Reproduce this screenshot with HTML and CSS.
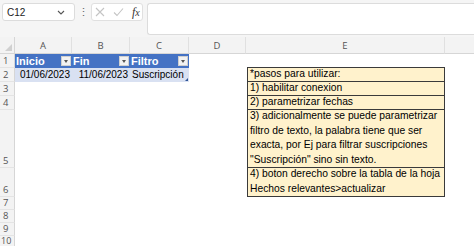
FILE: index.html
```html
<!DOCTYPE html>
<html lang="es">
<head>
  <meta charset="UTF-8" />
  <title>Hechos relevantes</title>
  <link rel="stylesheet" href="styles.css">
</head>
<body>
  <div class="formula-bar">
    <div class="name-box">
      <span>C12</span>
      <svg class="chev" width="8" height="5" viewBox="0 0 8 5"><path d="M1 1l3 3 3-3" fill="none" stroke="#555" stroke-width="1.1"/></svg>
    </div>
    <div class="grip">⋮</div>
    <div class="fx-buttons">
      <svg width="10" height="10" viewBox="0 0 10 10"><path d="M1 1l8 8M9 1l-8 8" stroke="#c4c4c4" stroke-width="1.1"/></svg>
      <svg width="11" height="10" viewBox="0 0 11 10"><path d="M1 5.5l3 3 6-7" fill="none" stroke="#c4c4c4" stroke-width="1.1"/></svg>
      <span class="fx">f<i>x</i></span>
    </div>
    <div class="formula-input"></div>
  </div>

  <div class="sheet">
    <!-- column headers -->
    <div class="corner"><span class="tri"></span></div>
    <div class="ch">A</div>
    <div class="ch">B</div>
    <div class="ch">C</div>
    <div class="ch">D</div>
    <div class="ch">E</div>
    <div class="ch last"></div>

    <!-- row 1 -->
    <div class="rh">1</div>
    <div class="cell th">Inicio<span class="dd"></span></div>
    <div class="cell th">Fin<span class="dd"></span></div>
    <div class="cell th">Filtro<span class="dd"></span></div>
    <div class="cell"></div>
    <div class="cell"></div>
    <div class="cell"></div>

    <!-- row 2 -->
    <div class="rh">2</div>
    <div class="cell td num">01/06/2023</div>
    <div class="cell td num">11/06/2023</div>
    <div class="cell td">Suscripción<span class="handle"></span></div>
    <div class="cell"></div>
    <div class="cell note first">*pasos para utilizar:</div>
    <div class="cell"></div>

    <!-- row 3 -->
    <div class="rh">3</div>
    <div class="cell"></div>
    <div class="cell"></div>
    <div class="cell"></div>
    <div class="cell"></div>
    <div class="cell note">1) habilitar conexion</div>
    <div class="cell"></div>

    <!-- row 4 -->
    <div class="rh">4</div>
    <div class="cell"></div>
    <div class="cell"></div>
    <div class="cell"></div>
    <div class="cell"></div>
    <div class="cell note">2) parametrizar fechas</div>
    <div class="cell"></div>

    <!-- row 5 -->
    <div class="rh">5</div>
    <div class="cell"></div>
    <div class="cell"></div>
    <div class="cell"></div>
    <div class="cell"></div>
    <div class="cell note wrap">3) adicionalmente se puede parametrizar<br>filtro de texto, la palabra tiene que ser<br>exacta, por Ej para filtrar suscripciones<br>"Suscripción" sino sin texto.</div>
    <div class="cell"></div>

    <!-- row 6 -->
    <div class="rh">6</div>
    <div class="cell"></div>
    <div class="cell"></div>
    <div class="cell"></div>
    <div class="cell"></div>
    <div class="cell note wrap">4) boton derecho sobre la tabla de la hoja<br>Hechos relevantes&gt;actualizar</div>
    <div class="cell"></div>

    <div class="rh">7</div>
    <div class="blank"></div>
    <div class="rh">8</div>
    <div class="blank"></div>
    <div class="rh">9</div>
    <div class="blank"></div>
    <div class="rh short">10</div>
    <div class="blank"></div>
  </div>
</body>
</html>
```

FILE: styles.css
```css
* {
  box-sizing: border-box;
  margin: 0;
  padding: 0;
}

body {
  width: 474px;
  height: 246px;
  overflow: hidden;
  background: #fff;
  font-family: "Liberation Sans", Arial, sans-serif;
}

/* formula bar */
.formula-bar {
  height: 37px;
  background: #f5f5f5;
  display: flex;
  align-items: flex-start;
  padding: 3px 0 0 2px;
}

.name-box {
  width: 73px;
  height: 18px;
  background: #fff;
  border: 1px solid #dcdcdc;
  border-radius: 3px;
  display: flex;
  align-items: center;
  justify-content: space-between;
  padding: 0 9px 0 4px;
  font-size: 10px;
  color: #222;
}

.grip {
  width: 16px;
  text-align: center;
  font-size: 11px;
  line-height: 18px;
  color: #666;
}

.fx-buttons {
  width: 52px;
  height: 18px;
  background: #fff;
  border: 1px solid #e0e0e0;
  border-radius: 3px;
  display: flex;
  align-items: center;
  gap: 8px;
  padding-left: 3px;
}

.fx {
  font-family: "Liberation Serif", serif;
  font-style: italic;
  font-size: 12px;
  color: #333;
}

.fx i {
  font-size: 10px;
}

.formula-input {
  flex: 1;
  height: 32px;
  margin-left: 4px;
  background: #fff;
  border: 1px solid #dcdcdc;
  border-right: none;
  border-radius: 3px 0 0 3px;
}

/* grid */
.sheet {
  display: grid;
  grid-template-columns: 15px 57px 58px 59px 57px 199px 1fr;
  grid-template-rows: 17px 14px 14px 14px 14px 58px 29px 13px 13px 13px 10px;
  font-size: 10px;
}

.corner {
  background: #f3f3f3;
  border-right: 1px solid #d6d6d6;
  border-bottom: 1px solid #d6d6d6;
  position: relative;
}

.tri {
  position: absolute;
  right: 2px;
  bottom: 2px;
  width: 0;
  height: 0;
  border-left: 7px solid transparent;
  border-bottom: 7px solid #d0d0d0;
}

.ch {
  background: #f3f3f3;
  border-right: 1px solid #e0e0e0;
  border-bottom: 1px solid #d6d6d6;
  text-align: center;
  font-family: "Open Sans", sans-serif;
  font-size: 9.5px;
  line-height: 18px;
  color: #555;
}

.ch.last {
  border-right: none;
}

.rh {
  grid-column: 1;
  background: #f3f3f3;
  border-right: 1px solid #d6d6d6;
  border-bottom: 1px solid #e4e4e4;
  display: flex;
  align-items: flex-end;
  padding-left: 3px;
  font-family: "Open Sans", sans-serif;
  font-size: 9.5px;
  line-height: 13px;
  color: #555;
}

.rh.short {
  padding-left: 1px;
  align-items: flex-start;
  line-height: 9px;
  font-size: 9px;
  border-bottom: none;
}

.blank {
  grid-column: 2 / -1;
}

.cell {
  position: relative;
  white-space: nowrap;
  color: #000;
  line-height: 14px;
  padding: 0 2px;
}

.th {
  background: #4472c4;
  color: #fff;
  font-weight: bold;
  font-size: 11px;
  padding-left: 1px;
}

.dd {
  position: absolute;
  right: 1px;
  top: 2px;
  width: 10px;
  height: 10px;
  background: #f2f2f2;
  border: 1px solid #cfcfcf;
}

.dd::after {
  content: '';
  position: absolute;
  left: 2px;
  top: 3px;
  border-left: 2.5px solid transparent;
  border-right: 2.5px solid transparent;
  border-top: 3px solid #555;
}

.td {
  background: #d9e1f2;
}

.num {
  text-align: right;
}

.handle {
  position: absolute;
  right: 1px;
  bottom: 1px;
  width: 0;
  height: 0;
  border-left: 3px solid transparent;
  border-bottom: 3px solid #2f5597;
}

.note {
  background: #fff2cc;
  border: 1px solid #3a3a3a;
  border-top: none;
  margin-left: 1px;
  display: flex;
  align-items: flex-end;
  font-size: 10.3px;
}

.note.first {
  border-top: 1px solid #3a3a3a;
  margin-top: -1px;
}

.wrap {
  line-height: 14.5px;
}
```
